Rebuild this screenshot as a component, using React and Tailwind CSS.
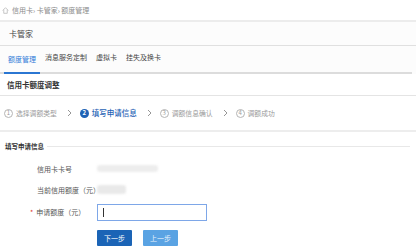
const steps = [
  { n: "1", label: "选择调额类型", active: false },
  { n: "2", label: "填写申请信息", active: true },
  { n: "3", label: "调额信息确认", active: false },
  { n: "4", label: "调额成功", active: false },
];

const tabs = ["额度管理", "消息服务定制", "虚拟卡", "挂失及换卡"];

const Step = ({ n, label, active }) => (
  <div className="flex items-center gap-[3px]">
    {active ? (
      <span className="w-[9px] h-[9px] rounded-full bg-[#1f62b5] text-white text-[6px] leading-none flex items-center justify-center font-bold">
        {n}
      </span>
    ) : (
      <span className="w-[9px] h-[9px] rounded-full border border-[#b5b5b5] text-[#9a9a9a] text-[6px] leading-none flex items-center justify-center">
        {n}
      </span>
    )}
    <span className={active ? "text-[#1f62b5] text-[7.5px] font-medium" : "text-[#9a9a9a] text-[6.8px]"}>
      {label}
    </span>
  </div>
);

const Chevron = () => (
  <svg width="5" height="8" viewBox="0 0 5 8" className="ml-[10px] mr-[8px]">
    <path d="M1 1l3 3-3 3" fill="none" stroke="#8a8a8a" strokeWidth="0.9" />
  </svg>
);

export default function App() {
  return (
    <div
      className="w-[416px] h-[251px] bg-white overflow-hidden text-[#333]"
      style={{ fontFamily: '"Noto Sans CJK SC", "Noto Sans", sans-serif' }}
    >
      {/* breadcrumb */}
      <div className="h-[20px] flex items-center pl-[2px] text-[7px] text-[#8c8c8c]">
        <svg width="7" height="7" viewBox="0 0 10 10" className="mr-[3px]">
          <path d="M1 5L5 1l4 4M2.5 4v5h5V4" fill="none" stroke="#b0b0b0" strokeWidth="1" />
        </svg>
        <span>信用卡›&nbsp;卡管家›&nbsp;额度管理</span>
      </div>

      <div className="bg-[#fcfcfc] border-t-2 border-[#ececec]">
        {/* header */}
        <div className="h-[24px] flex items-center pl-[9px] text-[8px] text-[#444] border-b border-[#e0e0e0]">
          卡管家
        </div>

        {/* tabs */}
        <div className="h-[28px] flex items-end gap-[1px] pl-[4px] mr-[4px] border-b-2 border-[#dcdcdc]">
          {tabs.map((t, i) => (
            <div
              key={t}
              className={
                i === 0
                  ? "px-[4px] pb-[8px] text-[7px] text-[#2f7ad8] border-b-2 border-[#2a76d2] -mb-[2px]"
                  : "px-[4px] pb-[10px] text-[7px] text-[#444]"
              }
            >
              {t}
            </div>
          ))}
        </div>
      </div>

      {/* title */}
      <div className="h-[22px] flex items-center pl-[7px] text-[7.5px] font-bold text-[#333] border-b border-[#e4e4e4]">
        信用卡额度调整
      </div>

      {/* steps */}
      <div className="h-[36px] flex items-center pl-[4px] border-b-2 border-[#ededed]">
        {steps.map((s, i) => (
          <div key={s.n} className="flex items-center">
            <Step {...s} />
            {i < steps.length - 1 && <Chevron />}
          </div>
        ))}
      </div>

      {/* form */}
      <div className="pt-[10px] pl-[5px] pr-[6px]">
        <div className="flex items-center gap-[3px]">
          <span className="text-[6.5px] font-bold text-[#333]">填写申请信息</span>
          <div className="flex-1 h-px bg-[#e8e8e8]" />
        </div>

        <div className="mt-[12px] flex items-center h-[10px]">
          <span className="w-[92px] pl-[32px] text-[7px] text-[#555]">信用卡卡号</span>
          <div className="w-[61px] h-[7px] rounded-[3px] bg-[#ededed] blur-[1px]" />
        </div>

        <div className="mt-[11px] flex items-center h-[10px]">
          <span className="w-[92px] pl-[32px] text-[7px] text-[#555] whitespace-nowrap">当前信用额度（元）</span>
          <div className="w-[29px] h-[9px] rounded-[3px] bg-[#e9e9e9] blur-[1px]" />
        </div>

        <div className="mt-[9px] flex items-center">
          <span className="w-[92px] pl-[25px] text-[7px] text-[#555] whitespace-nowrap">
            <span className="text-[#e0302c] mr-[3px]">*</span>申请额度（元）
          </span>
          <div className="w-[110px] h-[17px] border border-[#7ea7e8] bg-white flex items-center pl-[5px]">
            <div className="w-px h-[9px] bg-[#333]" />
          </div>
        </div>

        <div className="mt-[9px] flex gap-[11px] pl-[92px]">
          <button className="w-[35px] h-[16px] bg-[#1b64b6] text-white text-[7px] rounded-[1px]">
            下一步
          </button>
          <button className="w-[35px] h-[16px] bg-[#5aa3e3] text-[#e8f2fc] text-[7px] rounded-[1px]">
            上一步
          </button>
        </div>
      </div>
    </div>
  );
}
